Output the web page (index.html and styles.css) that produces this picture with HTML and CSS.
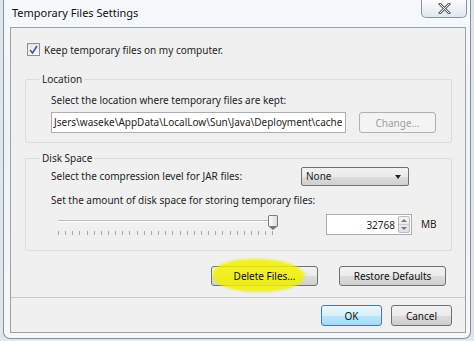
FILE: index.html
```html
<!DOCTYPE html>
<html lang="en">
  <head>
    <meta charset="UTF-8" />
    <title>Temporary Files Settings</title>
    <link rel="stylesheet" href="styles.css">
  </head>
  <body>
    <div class="window">
      <div class="titlebar">
        <span class="title">Temporary Files Settings</span>
        <button class="close" type="button">
          <svg width="13" height="11" viewBox="0 0 13 11">
            <path d="M2 1 L11 10 M11 1 L2 10" stroke="#666" stroke-width="2.8" stroke-linecap="square" />
            <path d="M2 1 L11 10 M11 1 L2 10" stroke="#eee" stroke-width="1" />
          </svg>
        </button>
      </div>

      <div class="panel">
        <label class="check-row">
          <span class="checkbox">
            <svg width="9" height="9" viewBox="0 0 9 9"><path d="M1 5 L3.5 8 L8 1" fill="none" stroke="#3d57a8" stroke-width="1.6" /></svg>
          </span>
          Keep temporary files on my computer.
        </label>

        <fieldset class="group location">
          <legend>Location</legend>
          <div class="text">Select the location where temporary files are kept:</div>
          <div class="row">
            <div class="path">Jsers\waseke\AppData\LocalLow\Sun\Java\Deployment\cache</div>
            <button class="btn disabled" type="button">Change...</button>
          </div>
        </fieldset>

        <fieldset class="group disk">
          <legend>Disk Space</legend>
          <div class="row compress">
            <div class="text">Select the compression level for JAR files:</div>
            <div class="select">None <span class="arrow"></span></div>
          </div>
          <div class="text">Set the amount of disk space for storing temporary files:</div>
          <div class="row amount">
            <div class="slider">
              <div class="track"></div>
              <div class="thumb"></div>
              <div class="ticks"></div>
            </div>
            <div class="spinner">
              <span class="value">32768</span>
              <span class="spin"><span class="up"></span><span class="down"></span></span>
            </div>
            <span class="unit">MB</span>
          </div>
        </fieldset>

        <div class="actions">
          <button class="btn wide marked" type="button">Delete Files...</button>
          <button class="btn wide" type="button">Restore Defaults</button>
        </div>

        <div class="footer">
          <button class="btn ok" type="button">OK</button>
          <button class="btn" type="button">Cancel</button>
        </div>
      </div>
    </div>
  </body>
</html>
```

FILE: styles.css
```css
body {
  margin: 0;
  width: 474px;
  height: 341px;
  overflow: hidden;
  background: #dfe7ee;
  font-family: "Noto Sans", "Open Sans", sans-serif;
  font-size: 10px;
  color: #1e1e1e;
}
.window {
  margin: 0 3px 0 3px;
  height: 339px;
  box-sizing: border-box;
  border: 1px solid #8a8f96;
  border-top: none;
  border-radius: 0 0 7px 7px;
  background: linear-gradient(180deg, #f6f9fc 0%, #edf3f8 40%, #f5f8fb 100%);
  padding: 0 4px 5px 6px;
  display: flex;
  flex-direction: column;
}
.titlebar {
  height: 27px;
  display: flex;
  align-items: flex-start;
  justify-content: space-between;
}
.title {
  margin-top: 5px;
  margin-left: 2px;
  font-size: 11px;
  line-height: 15px;
  color: #111;
}
.close {
  width: 46px;
  height: 18px;
  margin-right: -1px;
  border: 1px solid #8d939b;
  border-top: none;
  border-radius: 0 0 5px 5px;
  background: linear-gradient(180deg, #fafcfe, #dfe8f0);
  display: flex;
  align-items: center;
  justify-content: center;
  padding: 0;
}
.panel {
  flex: 1;
  background: #f0f0f0;
  border: 1px solid #a0a0a0;
  display: flex;
  flex-direction: column;
  padding: 0 13px 0 14px;
}
.check-row {
  display: flex;
  align-items: center;
  gap: 4px;
  height: 13px;
  margin-top: 15px;
  margin-left: 2px;
}
.checkbox {
  width: 11px;
  height: 11px;
  border: 1px solid #8e8f8f;
  background: linear-gradient(180deg, #e6e6e6, #fbfbfb);
  display: flex;
  align-items: center;
  justify-content: center;
}
.group {
  margin: 0;
  border: 1px solid #d5dfe5;
  border-radius: 2px;
  padding: 0 12px 0 25px;
  box-sizing: border-box;
}
.group legend {
  padding: 0 2px;
  margin-left: -11px;
  line-height: 14px;
}
.location {
  margin-top: 16px;
  height: 71px;
}
.location > .text {
  margin-top: 7px;
}
.text {
  line-height: 15px;
}
.row {
  display: flex;
  align-items: center;
}
.location .row {
  margin-top: 4px;
  gap: 13px;
}
.path {
  width: 291px;
  height: 19px;
  border: 1px solid #abadb3;
  background: #fff;
  white-space: nowrap;
  overflow: hidden;
  padding-left: 2px;
  line-height: 19px;
}
.btn {
  font-family: inherit;
  font-size: 10px;
  height: 21px;
  width: 61px;
  border: 1px solid #707070;
  border-radius: 3px;
  background: linear-gradient(180deg, #f2f2f2 0%, #ebebeb 50%, #dddddd 51%, #cfcfcf 100%);
  color: #111;
  padding: 0;
}
.btn.disabled {
  width: 77px;
  color: #a0a0a0;
  border-color: #adb2b5;
  background: #f4f4f4;
}
.disk {
  margin-top: 8px;
  height: 100px;
}
.compress {
  margin-top: 2px;
}
.select {
  margin-left: auto;
  margin-right: 30px;
  width: 102px;
  height: 17px;
  border: 1px solid #707070;
  border-radius: 2px;
  background: linear-gradient(180deg, #f2f2f2 0%, #ebebeb 50%, #dddddd 51%, #cfcfcf 100%);
  padding-left: 4px;
  line-height: 17px;
  position: relative;
}
.arrow {
  position: absolute;
  right: 7px;
  top: 7px;
  border-left: 3.5px solid transparent;
  border-right: 3.5px solid transparent;
  border-top: 4px solid #222;
}
.disk > .text {
  margin-top: 7px;
}
.amount {
  margin-top: 6px;
  align-items: flex-start;
}
.slider {
  position: relative;
  width: 226px;
  height: 26px;
  margin-left: 6px;
}
.track {
  position: absolute;
  left: 1px;
  width: 214px;
  top: 6px;
  height: 1px;
  background: #b9b9b9;
  border-bottom: 1px solid #fff;
}
.thumb {
  position: absolute;
  left: 211px;
  top: 1px;
  width: 8px;
  height: 10px;
  border: 1px solid #7a7a7a;
  border-bottom: none;
  border-radius: 2px 2px 0 0;
  background: linear-gradient(90deg, #fafafa, #dcdcdc);
}
.thumb::after {
  content: "";
  position: absolute;
  left: -1px;
  top: 10px;
  border-left: 5px solid transparent;
  border-right: 5px solid transparent;
  border-top: 4px solid #7a7a7a;
}
.ticks {
  position: absolute;
  left: 1px;
  top: 17px;
  width: 216px;
  height: 4px;
  background: repeating-linear-gradient(90deg, #a8a8a8 0 1px, transparent 1px 7.15px);
}
.spinner {
  margin-left: 43px;
  width: 84px;
  height: 19px;
  border: 1px solid #abadb3;
  background: #fff;
  display: flex;
  align-items: center;
  justify-content: flex-end;
}
.value {
  margin-right: 3px;
}
.spin {
  width: 12px;
  height: 17px;
  margin-right: 1px;
  display: flex;
  flex-direction: column;
  border: 1px solid #b8bcc2;
  border-radius: 2px;
  box-sizing: border-box;
  background: linear-gradient(180deg, #f4f4f4, #e0e0e0);
}
.spin span {
  flex: 1;
  position: relative;
}
.up {
  border-bottom: 1px solid #c6c9cd;
}
.up::after, .down::after {
  content: "";
  position: absolute;
  left: 2px;
  top: 2px;
  border-left: 3px solid transparent;
  border-right: 3px solid transparent;
}
.up::after {
  border-bottom: 3px solid #6b7d91;
}
.down::after {
  border-top: 3px solid #6b7d91;
}
.unit {
  margin-left: 9px;
  margin-top: 3px;
}
.actions {
  display: flex;
  justify-content: flex-end;
  gap: 21px;
  margin-top: 15px;
  padding-right: 6px;
}
.btn.wide {
  width: 107px;
  height: 20px;
}
.marked {
  position: relative;
  isolation: isolate;
}
.marked::before {
  content: "";
  position: absolute;
  left: 1px;
  top: -8px;
  width: 92px;
  height: 33px;
  border-radius: 45% 55% 50% 50%;
  background: rgba(240, 240, 0, 0.85);
  z-index: -1;
  filter: blur(1px);
}
.footer {
  margin: 11px -13px 0 -14px;
  border-top: 1px solid #c8c8c8;
  display: flex;
  justify-content: flex-end;
  gap: 9px;
  padding: 7px 13px 0 0;
}
.btn.ok {
  border-color: #3c7fb1;
  background: linear-gradient(180deg, #eaf6fd 0%, #d9f0fc 50%, #bee6fd 51%, #a7d9f5 100%);
}
```
